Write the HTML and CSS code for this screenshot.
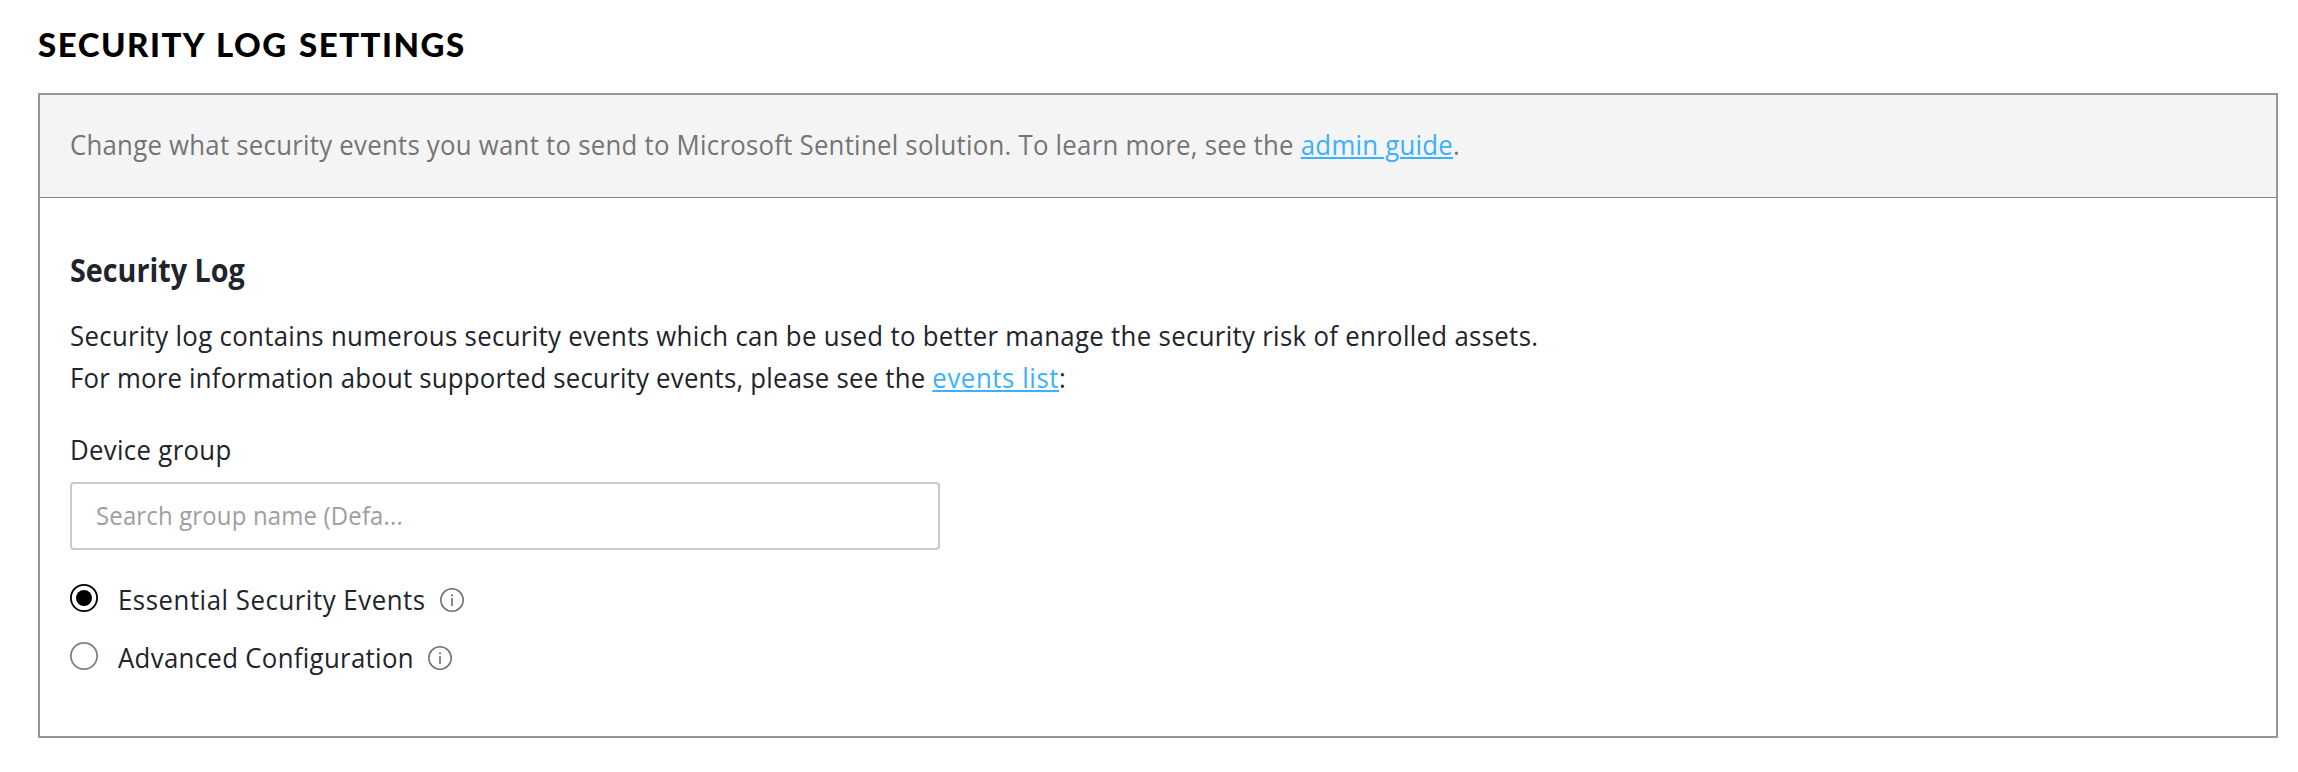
FILE: index.html
```html
<!DOCTYPE html>
<html lang="en">
<head>
<meta charset="utf-8">
<title>Security Log Settings</title>
<link rel="stylesheet" href="styles.css">
</head>
<body>
<main class="page">
  <h1 class="page-title">Security Log Settings</h1>
  <section class="panel">
    <p class="panel-note"><span class="narrow">Change what security events you want to send to Microsoft Sentinel solution. To learn more, see the <a class="link" href="#">admin guide</a>.</span></p>
    <div class="panel-body">
      <h2 class="section-title"><span class="narrow">Security Log</span></h2>
      <p class="description"><span class="narrow">Security log contains numerous security events which can be used to better manage the security risk of enrolled assets.<br><span class="more">For more information about supported security events, please see the <a class="link" href="#">events list</a>:</span></span></p>
      <div class="field-label"><span class="narrow">Device group</span></div>
      <div class="field"><span class="narrow">Search group name (Defa...</span></div>
      <div class="options">
        <div class="option">
          <svg class="radio" viewBox="0 0 28 28"><circle cx="14" cy="14" r="13.1" fill="#fff" stroke="#000" stroke-width="1.8"/><circle cx="14" cy="14" r="8" fill="#000"/></svg>
          <span class="option-label essential"><span class="narrow">Essential Security Events</span></span>
          <svg class="info" viewBox="0 0 24 24"><circle cx="12" cy="12" r="11.2" fill="none" stroke="#757575" stroke-width="1.6"/><circle cx="12" cy="7.3" r="1.1" fill="#757575"/><path d="M12 10v8" stroke="#757575" stroke-width="1.7"/></svg>
        </div>
        <div class="option">
          <svg class="radio" viewBox="0 0 28 28"><circle cx="14" cy="14" r="13.1" fill="#fff" stroke="#808080" stroke-width="1.8"/></svg>
          <span class="option-label advanced"><span class="narrow">Advanced Configuration</span></span>
          <svg class="info" viewBox="0 0 24 24"><circle cx="12" cy="12" r="11.2" fill="none" stroke="#757575" stroke-width="1.6"/><circle cx="12" cy="7.3" r="1.1" fill="#757575"/><path d="M12 10v8" stroke="#757575" stroke-width="1.7"/></svg>
        </div>
      </div>
    </div>
  </section>
</main>
</body>
</html>
```
FILE: styles.css
```css
* { box-sizing: border-box; }
body {
  margin: 0;
  background: #fff;
  color: #20242b;
  font: 400 28px/42px "Open Sans", "Noto Sans", sans-serif;
  letter-spacing: 0.36px;
}
h1, h2, p { margin: 0; }
.page { padding: 20px 20px 0 38px; }
.page-title {
  height: 73px;
  color: #000;
  font: 900 33px/48px Lato, sans-serif;
  letter-spacing: 1.5px;
  word-spacing: 2px;
  text-transform: uppercase;
}
.narrow {
  display: inline-block;
  white-space: nowrap;
  transform: scaleX(0.92);
  transform-origin: 0 0;
}
.panel { height: 645px; border: 2px solid #969696; }
.panel-note {
  height: 103px;
  padding: 28px 30px 0;
  border-bottom: 1px solid #858585;
  background: #f4f4f4;
  color: #757575;
  letter-spacing: 0.28px;
}
.link { color: #3ab0ff; text-decoration: underline; text-decoration-thickness: 2px; text-underline-offset: 2px; }
.panel-body { padding: 48px 30px 0; }
.section-title { font-size: 32px; line-height: 48px; font-weight: 700; letter-spacing: 0; }
.section-title .narrow { transform: scaleX(0.897); }
.description { margin-top: 20px; }
.more { letter-spacing: 0.25px; }
.more .link { letter-spacing: 0.65px; }
.field-label { margin-top: 30px; }
.field {
  width: 870px;
  height: 68px;
  margin-top: 12px;
  padding: 10px 24px;
  border: 2px solid #cacaca;
  border-radius: 4px;
  color: #9e9e9e;
  font-size: 26px;
  letter-spacing: 0.19px;
}
.options { display: grid; gap: 16px; margin-top: 28px; }
.option { display: flex; height: 42px; }
.radio { flex: none; width: 28px; height: 28px; margin: 6px 20px 0 0; }
.option-label { flex: none; }
.essential { width: 308px; letter-spacing: 0.6px; }
.advanced { width: 296px; }
.info { flex: none; width: 24px; height: 24px; margin: 10px 0 0 14px; }
```
